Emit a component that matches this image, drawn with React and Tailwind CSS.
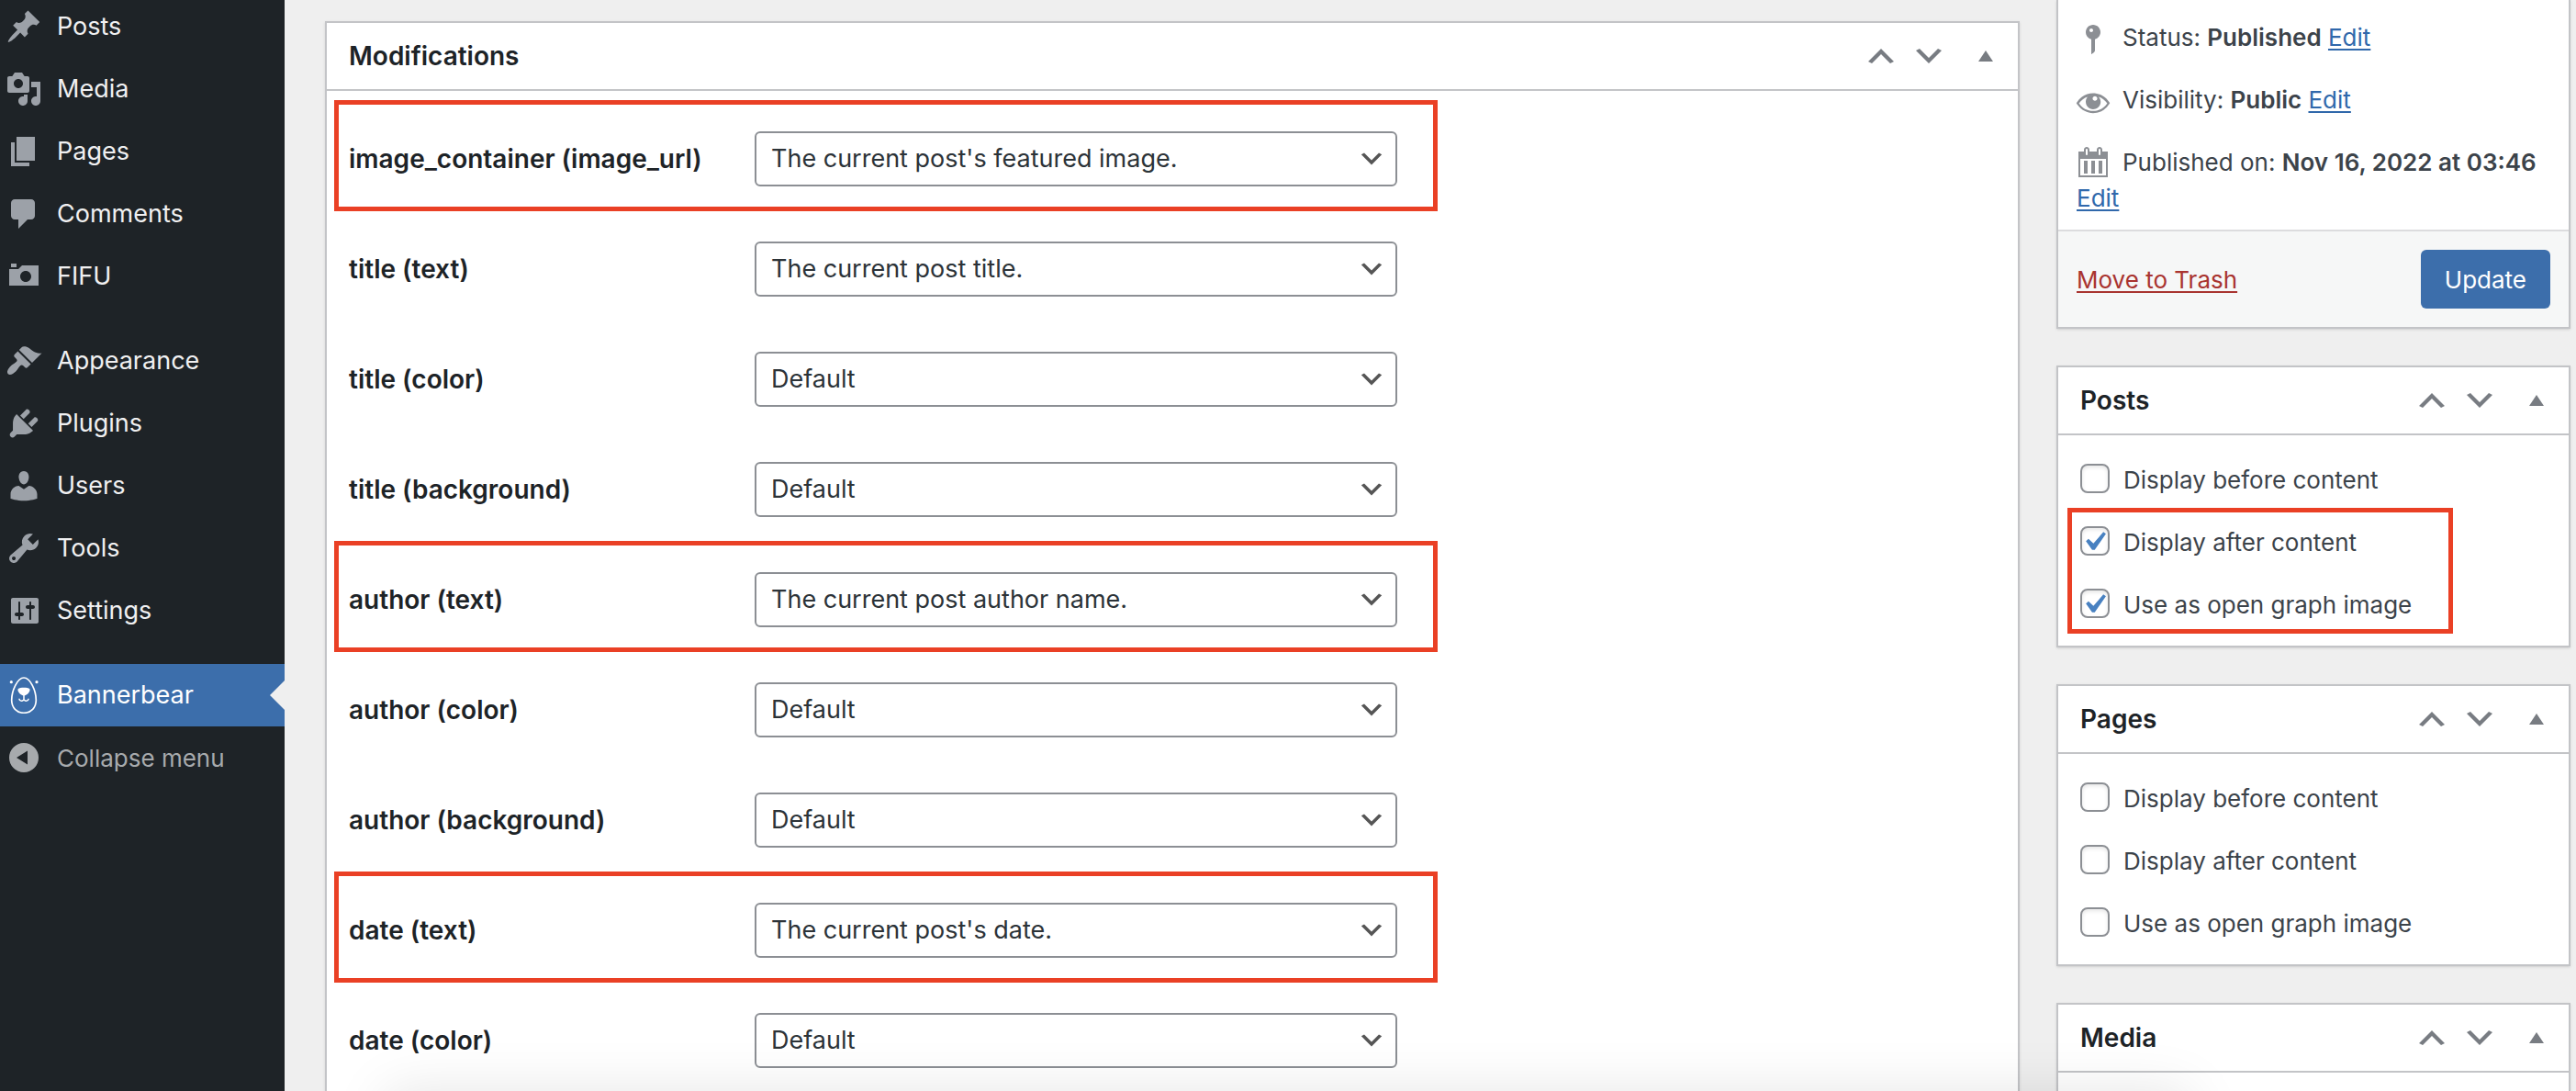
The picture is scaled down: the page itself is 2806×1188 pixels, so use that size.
const ICONS = {
  post: "M10.44 3.02l1.82-1.82 6.36 6.35-1.83 1.82c-1.05-.68-2.48-.57-3.41.36l-.75.75c-.92.93-1.04 2.35-.35 3.41l-1.83 1.82-2.41-2.41-2.8 2.79c-.42.42-3.38 2.71-3.8 2.29s1.86-3.39 2.28-3.81l2.79-2.79L4.1 9.36l1.83-1.82c1.05.69 2.48.57 3.4-.36l.75-.75c.93-.92 1.05-2.35.36-3.41z",
  media: "M13 11V4c0-.55-.45-1-1-1h-1.67L9 1H5L3.67 3H2c-.55 0-1 .45-1 1v7c0 .55.45 1 1 1h10c.55 0 1-.45 1-1zM7 4.5c1.38 0 2.5 1.12 2.5 2.5S8.38 9.5 7 9.5 4.5 8.38 4.5 7 5.62 4.5 7 4.5zM14 6h5v10.5c0 1.38-1.12 2.5-2.5 2.5S14 17.88 14 16.5s1.12-2.5 2.5-2.5c.17 0 .34.02.5.05V9h-3V6zm-4 8.05V13h2v3.5c0 1.38-1.12 2.5-2.5 2.5S7 17.88 7 16.5 8.12 14 9.5 14c.17 0 .34.02.5.05z",
  page: "M6 15V2h10v13H6zm-1 1h8v2H3V5h2v11z",
  comment: "M5 2h9c1.1 0 2 .9 2 2v7c0 1.1-.9 2-2 2h-2l-5 5v-5H5c-1.1 0-2-.9-2-2V4c0-1.1.9-2 2-2z",
  camera: "M6 5V3H3v2h3zm12 10V4H9L7 6H2v9h16zm-7-8c1.66 0 3 1.34 3 3s-1.34 3-3 3-3-1.34-3-3 1.34-3 3-3z",
  appearance: "M14.48 11.06L7.41 3.99l1.5-1.5c.5-.56 2.3-.47 3.51.32 1.21.8 1.43 1.28 2.91 2.1 1.18.64 2.45 1.26 4.45.85zm-.71.71L6.7 4.7 4.93 6.47c-.39.39-.39 1.02 0 1.41l1.06 1.06c.39.39.39 1.03 0 1.42-.6.6-1.43 1.11-2.21 1.69-.35.26-.7.53-1.01.84C1.43 14.23.4 16.08 1.4 17.07c.99 1 2.84-.03 4.18-1.36.31-.31.58-.66.85-1.02.57-.78 1.08-1.61 1.69-2.21.39-.39 1.02-.39 1.41 0l1.06 1.06c.39.39 1.02.39 1.41 0z",
  plugins: "M13.11 4.36L9.87 7.6 8 5.73l3.24-3.24c.35-.34 1.05-.2 1.56.32.52.51.66 1.21.31 1.55zm-8 1.77l.91-1.12 9.01 9.01-1.19.84c-.71.71-2.63 1.16-3.82 1.16H6.14L4.9 17.26c-.59.59-1.54.59-2.12 0-.59-.58-.59-1.53 0-2.12l1.24-1.24v-3.88c0-1.13.4-3.19 1.09-3.89zm7.26 3.97l3.24-3.24c.34-.35 1.04-.21 1.55.31.52.51.66 1.21.31 1.55l-3.24 3.25z",
  users: "M10 9.25c-2.27 0-2.73-3.44-2.73-3.44C7 4.02 7.82 2 9.97 2c2.16 0 2.98 2.02 2.71 3.81 0 0-.41 3.44-2.68 3.44zm0 2.57L12.72 10c2.39 0 4.52 2.33 4.52 4.53v2.49s-3.65 1.13-7.24 1.13c-3.65 0-7.24-1.13-7.24-1.13v-2.49c0-2.25 1.94-4.48 4.47-4.48z",
  tools: "M16.68 9.77c-1.34 1.34-3.3 1.67-4.95.99l-5.41 6.52c-.99.99-2.59.99-3.58 0s-.99-2.59 0-3.57l6.52-5.42c-.68-1.65-.35-3.61.99-4.95 1.28-1.28 3.12-1.62 4.72-1.06l-2.89 2.89 2.82 2.82 2.86-2.87c.53 1.58.18 3.39-1.08 4.65zM3.81 16.21c.4.39 1.04.39 1.43 0 .4-.4.4-1.04 0-1.43-.39-.4-1.03-.4-1.43 0-.39.39-.39 1.03 0 1.43z",
  settings: "M18 16V4c0-.55-.45-1-1-1H4c-.55 0-1 .45-1 1v12c0 .55.45 1 1 1h13c.55 0 1-.45 1-1zM8 11h1c.55 0 1 .45 1 1s-.45 1-1 1H8v1.5c0 .28-.22.5-.5.5s-.5-.22-.5-.5V13H6c-.55 0-1-.45-1-1s.45-1 1-1h1V5.5c0-.28.22-.5.5-.5s.5.22.5.5V11zm5-2h-1c-.55 0-1-.45-1-1s.45-1 1-1h1V5.5c0-.28.22-.5.5-.5s.5.22.5.5V7h1c.55 0 1 .45 1 1s-.45 1-1 1h-1v5.5c0 .28-.22.5-.5.5s-.5-.22-.5-.5V9z",
  collapse: "M10 2a8 8 0 1 0 0 16 8 8 0 0 0 0-16zm2 4.3v7.4L6 10z",
  up: "M15 14l-5-5-5 5-2-1 7-7 7 7z",
  down: "M5 6l5 5 5-5 2 1-7 7-7-7z",
  triangle: "M14 13H6l4-6z",
  pin: "M14 6c0 1.86-1.28 3.41-3 3.86V16c0 1-2 2-2 2V9.86c-1.72-.45-3-2-3-3.86 0-2.21 1.79-4 4-4s4 1.79 4 4zM8 5c0 .55.45 1 1 1s1-.45 1-1-.45-1-1-1-1 .45-1 1z",
  eye: "M18.3 9.5C15 4.9 8.5 3.8 3.9 7.2c-1.2.9-2.2 2.1-3 3.4.2.4.5.8.8 1.2 3.3 4.6 9.6 5.6 14.2 2.4.9-.7 1.7-1.4 2.4-2.4.3-.4.5-.8.8-1.2-.3-.4-.5-.8-.8-1.1zm-8.2-2.3c.5-.5 1.3-.5 1.8 0s.5 1.3 0 1.8-1.3.5-1.8 0-.5-1.3 0-1.8zm-.1 7.7c-3.1 0-6-1.6-7.7-4.2C3.5 9 5.1 7.8 7 7.2c-.7.8-1 1.7-1 2.7 0 2.2 1.7 4.1 4 4.1 2.2 0 4.1-1.7 4.1-4v-.1c0-1-.4-2-1.1-2.7 1.9.6 3.5 1.8 4.7 3.5-1.7 2.6-4.6 4.2-7.7 4.2z",
  calendar: "M15 3h3v14H2V3h3V2c0-.83.67-1.5 1.5-1.5S8 1.17 8 2v1h4V2c0-.83.67-1.5 1.5-1.5S15 1.17 15 2v1zM6 2v2.5a.5.5 0 0 0 1 0V2a.5.5 0 0 0-1 0zm7 0v2.5a.5.5 0 0 0 1 0V2a.5.5 0 0 0-1 0zm4 14V7H3v9h14zM7 8v7H5V8h2zm4 0v7H9V8h2zm4 0v7h-2V8h2z",
};

function Icon({ name, className = "" }) {
  return (
    <svg viewBox="0 0 20 20" fill="currentColor" fillRule="evenodd" aria-hidden="true" className={`size-10 shrink-0 ${className}`}>
      <path d={ICONS[name]} />
    </svg>
  );
}

function BearIcon() {
  return (
    <svg viewBox="0 0 40 40" fill="none" stroke="currentColor" aria-hidden="true" className="size-10 shrink-0">
      <path d="M20 1c7 0 13.3 14 13.3 24.3 0 8.2-5.3 14-13.3 14S6.7 33.5 6.7 25.3C6.7 15 13 1 20 1z" strokeWidth="1.7" />
      <path d="M13.8 13c2-1.6 10.4-1.6 12.4 0 1.7 2-2.5 7.5-6.200 7.500S12.100 15 13.800 13z" fill="currentColor" stroke="none" />
      <path d="M20 19v5.500M15 23.700c-.3 3.200 5 3.200 5 .5 0 2.700 5.300 2.700 5-.5" strokeWidth="1.5" />
      <circle cx="6.3" cy="5.7" r="1.6" fill="currentColor" stroke="none" />
      <circle cx="34" cy="5.7" r="1.6" fill="currentColor" stroke="none" />
    </svg>
  );
}

const CONTENT_MENU = [
  ["Posts", "post"],
  ["Media", "media"],
  ["Pages", "page"],
  ["Comments", "comment"],
  ["FIFU", "camera"],
];

const ADMIN_MENU = [
  ["Appearance", "appearance"],
  ["Plugins", "plugins"],
  ["Users", "users"],
  ["Tools", "tools"],
  ["Settings", "settings"],
];

function MenuList({ items }) {
  return (
    <ul>
      {items.map(([label, icon]) => (
        <li key={label}>
          <a href="#" className="flex h-[68px] items-center gap-4 pl-1.5 text-[#f0f0f1]">
            <Icon name={icon} className="text-[#9ca1a8]" />
            {label}
          </a>
        </li>
      ))}
    </ul>
  );
}

function Sidebar() {
  return (
    <nav aria-label="Main menu" className="w-[310px] shrink-0 bg-[#1e2327] text-[27px]">
      <div className="-mt-[5px] flex flex-col gap-6">
        <MenuList items={CONTENT_MENU} />
        <MenuList items={ADMIN_MENU} />
        <div>
          <a href="#" aria-current="page" className="relative flex h-[68px] items-center gap-4 bg-[#3c6eab] pl-1.5 text-white">
            <BearIcon />
            Bannerbear
            <svg viewBox="0 0 16 32" aria-hidden="true" className="absolute right-0 h-8 w-4 fill-[#efefef]">
              <path d="M16 0v32L0 16z" />
            </svg>
          </a>
          <button type="button" className="flex h-[68px] w-full items-center gap-4 pl-1.5 text-[26px] text-[#a7aaad]">
            <Icon name="collapse" />
            Collapse menu
          </button>
        </div>
      </div>
    </nav>
  );
}

function Panel({ title, children }) {
  return (
    <section className="border-2 border-[#c3c4c7] bg-white shadow-sm">
      <header className="flex h-[74px] items-center border-b-2 border-[#c3c4c7] pr-[15px] pl-6">
        <h2 className="flex-1 text-[28px] font-semibold text-[#1d2327]">{title}</h2>
        <div className="flex items-center gap-3 text-[#787c82]">
          <button type="button" aria-label={`Move ${title} up`}><Icon name="up" /></button>
          <button type="button" aria-label={`Move ${title} down`}><Icon name="down" /></button>
          <button type="button" aria-label={`Toggle ${title}`} className="ml-2.5"><Icon name="triangle" /></button>
        </div>
      </header>
      {children}
    </section>
  );
}

const FIELDS = [
  ["image_container (image_url)", "The current post's featured image.", true],
  ["title (text)", "The current post title."],
  ["title (color)", "Default"],
  ["title (background)", "Default"],
  ["author (text)", "The current post author name.", true],
  ["author (color)", "Default"],
  ["author (background)", "Default"],
  ["date (text)", "The current post's date.", true],
  ["date (color)", "Default"],
];

function Field({ label, value, marked }) {
  return (
    <div className="relative flex h-[120px] items-center">
      {marked && (
        <div className="pointer-events-none absolute -top-1 -left-4 h-[121px] w-[1202px] border-[5px] border-[#ea4025]" />
      )}
      <label htmlFor={label} className="w-[442px] shrink-0 text-[28px] font-semibold text-[#1d2327]">{label}</label>
      <div className="relative w-[700px]">
        <select id={label} className="h-[60px] w-full appearance-none rounded-md border-2 border-[#8c8f94] bg-white pr-12 pl-4 text-[27px] text-[#2c3338]">
          <option>{value}</option>
        </select>
        <svg viewBox="0 0 20 20" aria-hidden="true" className="pointer-events-none absolute top-3.5 right-3 size-8 fill-[#555]">
          <path d={ICONS.down} />
        </svg>
      </div>
    </div>
  );
}

function Check({ group, label, checked = false }) {
  const id = `${group}-${label}`;
  return (
    <div className="flex items-start gap-[15px]">
      <span className="relative mt-0.5 size-8 shrink-0">
        <input
          id={id}
          type="checkbox"
          defaultChecked={checked}
          className="peer block size-8 appearance-none rounded-lg border-2 border-[#8c8f94] bg-white shadow-[inset_0_2px_4px_rgba(0,0,0,0.1)]"
        />
        <svg viewBox="0 0 20 20" aria-hidden="true" className="pointer-events-none absolute -top-1 -left-1.5 hidden size-[42px] fill-[#4881c1] peer-checked:block">
          <path d="M14.83 4.89l1.34.94-5.81 8.38H9.02L5.78 9.67l1.34-1.25 2.57 2.4z" />
        </svg>
      </span>
      <label htmlFor={id}>{label}</label>
    </div>
  );
}

function DisplayPanel({ title, marked = false }) {
  return (
    <Panel title={title}>
      <div className="flex flex-col gap-[29px] px-6 pt-[29px] pb-[25px] text-[26px] leading-[39px]">
        <Check group={title} label="Display before content" />
        <div className="relative flex flex-col gap-[29px]">
          <Check group={title} label="Display after content" checked={marked} />
          <Check group={title} label="Use as open graph image" checked={marked} />
          {marked && (
            <div className="pointer-events-none absolute -top-[18px] -bottom-3 -left-3.5 w-[420px] border-[5px] border-[#ea4025]" />
          )}
        </div>
      </div>
    </Panel>
  );
}

function EditLink() {
  return <a href="#" className="text-[#3068ab] underline decoration-2 underline-offset-[3px]">Edit</a>;
}

function PublishPanel() {
  return (
    <section className="border-2 border-t-0 border-[#c3c4c7] bg-white text-[26px] leading-[39px] shadow-sm">
      <div className="flex flex-col gap-[29px] px-5 pt-[21px] pb-[15px]">
        <p>
          <Icon name="pin" className="-my-2 mr-3 -ml-0.5 inline text-[#8c8f94]" />
          Status: <b className="font-semibold">Published</b> <EditLink />
        </p>
        <p>
          <Icon name="eye" className="-my-2 mr-3 -ml-0.5 inline text-[#8c8f94]" />
          Visibility: <b className="font-semibold">Public</b> <EditLink />
        </p>
        <p>
          <Icon name="calendar" className="-my-2 mr-3 -ml-0.5 inline text-[#8c8f94]" />
          Published on: <b className="font-semibold">Nov 16, 2022 at 03:46</b> <EditLink />
        </p>
      </div>
      <div className="flex items-center justify-between border-t-2 border-[#dcdcde] bg-[#f6f7f7] p-5">
        <a href="#" className="text-[#a93430] underline decoration-2 underline-offset-[3px]">Move to Trash</a>
        <button type="button" className="h-16 rounded-md bg-[#3c6eab] px-[26px] text-white">Update</button>
      </div>
    </section>
  );
}

export default function App() {
  return (
    <div className="relative flex h-screen overflow-hidden bg-[#efefef] font-['Inter',sans-serif] text-[#3c434a]">
      <Sidebar />
      <main className="flex min-w-0 flex-1 items-start gap-10 pr-1.5 pl-11">
        <div className="min-w-0 flex-1 pt-[23px]">
          <Panel title="Modifications">
            <form className="px-6 pt-3.5 pb-6">
              {FIELDS.map(([label, value, marked]) => (
                <Field key={label} label={label} value={value} marked={marked} />
              ))}
            </form>
          </Panel>
        </div>
        <aside className="flex w-[560px] shrink-0 flex-col gap-10">
          <PublishPanel />
          <DisplayPanel title="Posts" marked />
          <DisplayPanel title="Pages" />
          <Panel title="Media">
            <div className="h-24" />
          </Panel>
        </aside>
      </main>
      {/* soft shadow rising from the bottom edge of the window */}
      <div className="pointer-events-none absolute inset-x-[420px] top-full h-20 shadow-[0_0_60px_rgba(0,0,0,0.1)]" />
    </div>
  );
}
